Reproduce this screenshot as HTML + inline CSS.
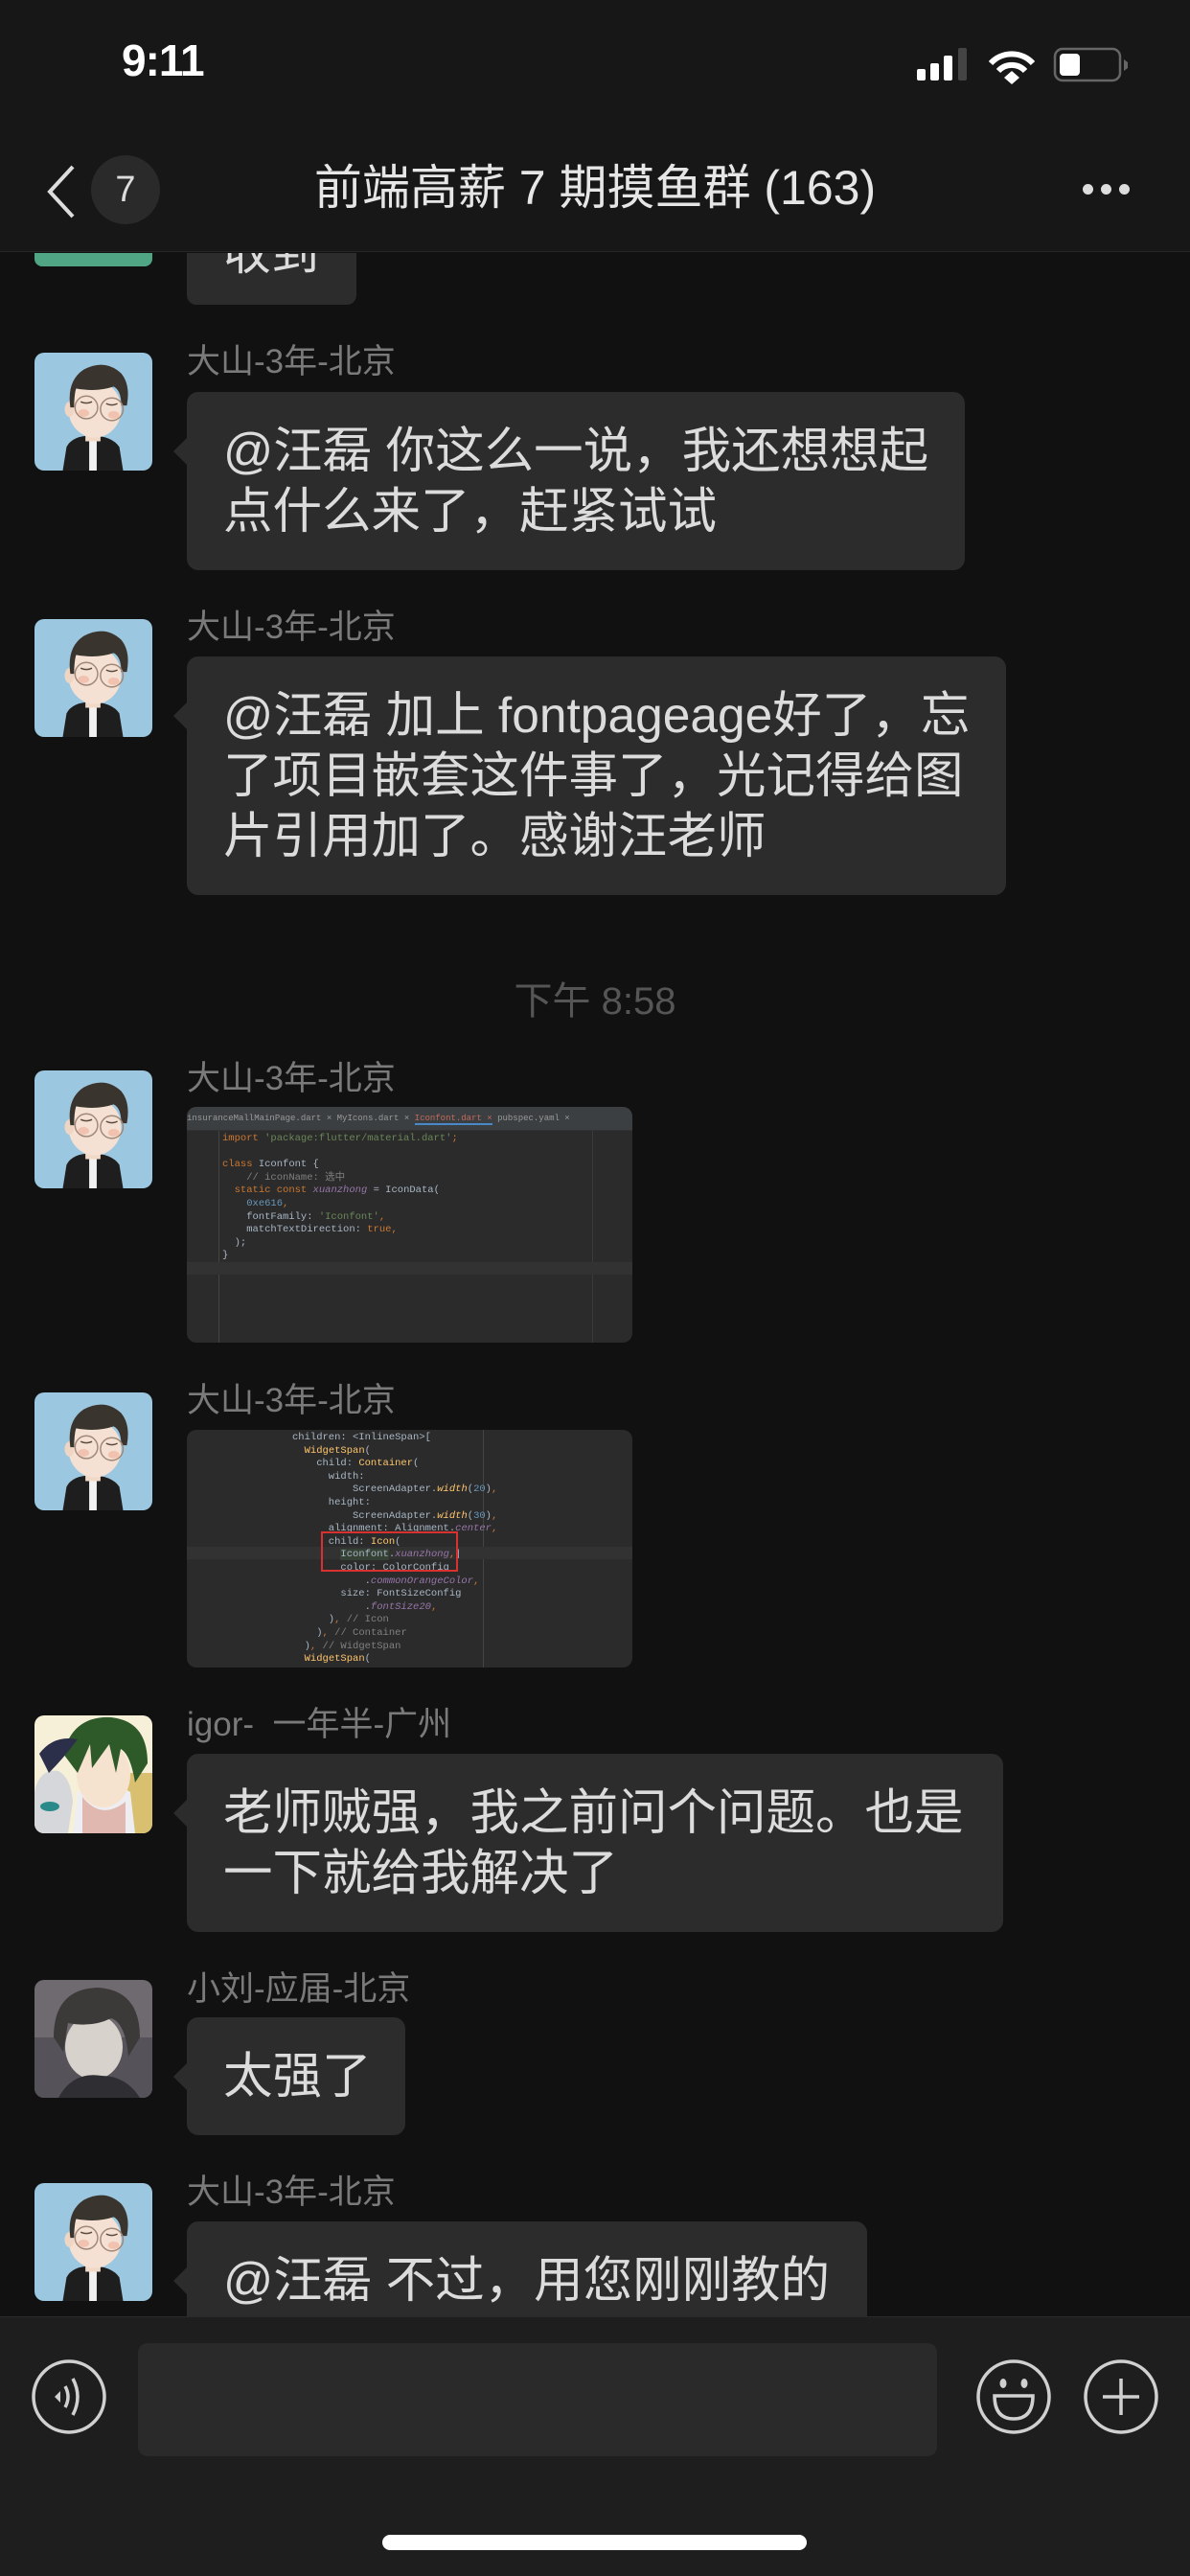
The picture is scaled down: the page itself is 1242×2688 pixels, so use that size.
<!DOCTYPE html>
<html><head><meta charset="utf-8">
<style>
*{margin:0;padding:0;box-sizing:border-box}
body{width:1242px;height:2688px;background:#111111;position:relative;overflow:hidden;font-family:"Liberation Sans","Noto Sans CJK SC",sans-serif;color:#d6d6d6}
.abs{position:absolute}
.name{position:absolute;left:195px;font-size:35px;color:#7a7a7a;line-height:40px;white-space:nowrap}
.bub{position:absolute;left:195px;background:#2c2c2c;border-radius:12px;padding:30px 38px;font-size:51.5px;line-height:63px;color:#dcdcdc;white-space:nowrap}
.bub:before{content:"";position:absolute;left:-14px;top:48px;border:14px solid transparent;border-left:0;border-right-color:#2c2c2c}
.av{position:absolute;left:36px;width:123px;height:123px;border-radius:10px;overflow:hidden}
.code{position:absolute;left:195px;width:465px;background:#2b2b2b;border-radius:10px;overflow:hidden;font-family:"Liberation Mono","Noto Sans CJK SC",monospace;font-size:10.5px;color:#a9b7c6;line-height:13.6px}
.code .l{white-space:pre;height:13.6px}
.k{color:#cc7832}.s{color:#6a8759}.c{color:#808080}.f{color:#ffc66d}.p{color:#9876aa;font-style:italic}
</style></head><body>
<svg width="0" height="0" style="position:absolute">
<defs>
<symbol id="man" viewBox="0 0 125 125">
<rect width="125" height="125" fill="#9cc7e0"/>
<path d="M30 125 L34 100 Q40 88 60 88 Q82 88 90 100 L94 125Z" fill="#1e1e1e"/>
<rect x="58" y="92" width="8" height="33" fill="#f2f2f2"/>
<rect x="54" y="80" width="16" height="14" fill="#f1d9c8"/>
<ellipse cx="64" cy="60" rx="28" ry="30" fill="#f5e1d3"/>
<ellipse cx="37" cy="60" rx="5" ry="8" fill="#efd5c3"/>
<path d="M38 58 Q34 30 52 18 Q75 6 92 22 Q102 34 98 56 L92 56 Q92 40 84 36 Q66 42 44 38 Q42 46 42 58Z" fill="#3a342e"/>
<circle cx="55" cy="58" r="12" fill="none" stroke="#a08878" stroke-width="1.5"/>
<circle cx="82" cy="60" r="12" fill="none" stroke="#a08878" stroke-width="1.5"/>
<ellipse cx="52" cy="64" rx="6" ry="4" fill="#f2c2b0"/>
<ellipse cx="84" cy="66" rx="6" ry="4" fill="#f2c2b0"/>
<path d="M49 52 Q55 55 61 52 M76 54 Q82 57 88 54" stroke="#5a4a40" stroke-width="1.5" fill="none"/>
</symbol>
</defs>
</svg>

<!-- header -->
<div class="abs" style="left:0;top:0;width:1242px;height:263px;background:#171717;border-bottom:1px solid #262626"></div>
<div class="abs" style="left:127px;top:36px;font-size:46px;color:#fff;font-weight:bold;letter-spacing:-1px">9:11</div>
<svg class="abs" style="left:950px;top:40px" width="240" height="50" viewBox="950 40 240 50">
<rect x="957" y="72" width="9" height="12" rx="2" fill="#fff"/>
<rect x="971" y="66" width="9" height="18" rx="2" fill="#fff"/>
<rect x="985" y="58" width="9" height="26" rx="2" fill="#fff"/>
<rect x="1000" y="50" width="9" height="34" rx="2" fill="#444"/>
<path d="M1034 66 A30 30 0 0 1 1078 66" stroke="#fff" stroke-width="6" fill="none"/>
<path d="M1042 74 A19 19 0 0 1 1070 74" stroke="#fff" stroke-width="6" fill="none"/>
<path d="M1048 81 L1056 74 L1064 81 L1056 88Z" fill="#fff"/>
<rect x="1101" y="51" width="68" height="33" rx="8" fill="none" stroke="#666" stroke-width="2.5"/>
<rect x="1106" y="56" width="21" height="23" rx="4" fill="#fff"/>
<path d="M1173 62 L1177 65 L1177 71 L1173 74Z" fill="#666"/>
</svg>
<svg class="abs" style="left:40px;top:170px" width="50" height="60"><path d="M36 4 L12 30 L36 56" stroke="#ddd" stroke-width="4" fill="none"/></svg>
<div class="abs" style="left:95px;top:162px;width:72px;height:72px;border-radius:36px;background:#2a2a2a;color:#ddd;font-size:38px;text-align:center;line-height:72px">7</div>
<div class="abs" style="left:0;width:1242px;top:163px;text-align:center;font-size:50px;color:#e6e6e6;line-height:66px">前端高薪 7 期摸鱼群 (163)</div>
<div class="abs" style="left:1130px;top:190px"><span style="display:inline-block;width:11px;height:11px;border-radius:6px;background:#ddd;margin-right:8px"></span><span style="display:inline-block;width:11px;height:11px;border-radius:6px;background:#ddd;margin-right:8px"></span><span style="display:inline-block;width:11px;height:11px;border-radius:6px;background:#ddd"></span></div>

<!-- partial top -->
<div class="abs" style="left:36px;top:264px;width:123px;height:14px;background:#4fa584;border-radius:0 0 8px 8px"></div>
<div class="abs" style="left:195px;top:264px;width:177px;height:54px;background:#2c2c2c;border-radius:0 0 10px 10px;overflow:hidden"><div style="font-size:50px;color:#dcdcdc;position:absolute;left:38px;top:-40px">收到</div></div>

<!-- msg1 -->
<svg class="av" style="top:368px"><use href="#man"/></svg>
<div class="name" style="top:358px">大山-3年-北京</div>
<div class="bub" style="top:409px;width:812px">@汪磊 你这么一说，我还想想起<br>点什么来了，赶紧试试</div>

<!-- msg2 -->
<svg class="av" style="top:646px"><use href="#man"/></svg>
<div class="name" style="top:635px">大山-3年-北京</div>
<div class="bub" style="top:685px;width:855px;height:249px">@汪磊 加上 fontpageage好了，忘<br>了项目嵌套这件事了，光记得给图<br>片引用加了。感谢汪老师</div>

<div class="abs" style="left:0;width:1242px;top:1012px;text-align:center;font-size:40px;color:#555">下午 8:58</div>

<!-- msg3 image -->
<svg class="av" style="top:1117px"><use href="#man"/></svg>
<div class="name" style="top:1106px">大山-3年-北京</div>
<div class="code" style="top:1155px;height:246px">
<div style="height:25px;background:#3c3f41;color:#999;font-size:9px;line-height:25px;white-space:nowrap;border-bottom:1px solid #323232">insuranceMallMainPage.dart ×  <span>MyIcons.dart ×</span>  <span style="color:#c06a5a;border-bottom:2px solid #4a88c7">Iconfont.dart ×</span>  pubspec.yaml ×</div>
<div class="abs" style="left:33px;top:25px;width:1px;height:221px;background:#444"></div>
<div class="abs" style="left:423px;top:25px;width:1px;height:221px;background:#3a3a3a"></div>
<div class="abs" style="left:0;top:162px;width:465px;height:13px;background:#323232"></div>
<div style="position:absolute;left:37px;top:27px"><div class="l"><span class="k">import</span> <span class="s">'package:flutter/material.dart'</span><span class="k">;</span></div><div class="l"> </div><div class="l"><span class="k">class</span> Iconfont {</div><div class="l">    <span class="c">// iconName: 选中</span></div><div class="l">  <span class="k">static const</span> <span class="p">xuanzhong</span> = IconData(</div><div class="l">    <span style="color:#6897bb">0xe616</span><span class="k">,</span></div><div class="l">    fontFamily: <span class="s">'Iconfont'</span><span class="k">,</span></div><div class="l">    matchTextDirection: <span class="k">true,</span></div><div class="l">  );</div><div class="l">}</div></div>
</div>

<!-- msg4 image -->
<svg class="av" style="top:1453px"><use href="#man"/></svg>
<div class="name" style="top:1442px">大山-3年-北京</div>
<div class="code" style="top:1492px;height:248px">
<div class="abs" style="left:309px;top:0;width:1px;height:248px;background:#444"></div>
<div class="abs" style="left:0;top:122px;width:465px;height:13px;background:#323232"></div>
<div style="position:absolute;left:110px;top:2px"><div class="l">children: &lt;InlineSpan&gt;[</div><div class="l">  <span class="f">WidgetSpan</span>(</div><div class="l">    child: <span class="f">Container</span>(</div><div class="l">      width:</div><div class="l">          ScreenAdapter.<span class="f" style="font-style:italic">width</span>(<span style="color:#6897bb">20</span>)<span class="k">,</span></div><div class="l">      height:</div><div class="l">          ScreenAdapter.<span class="f" style="font-style:italic">width</span>(<span style="color:#6897bb">30</span>)<span class="k">,</span></div><div class="l">      alignment: Alignment.<span class="p">center</span><span class="k">,</span></div><div class="l">      child: <span class="f">Icon</span>(</div><div class="l">        <span style="background:#344134">Iconfont</span>.<span class="p">xuanzhong</span><span class="k">,</span>|</div><div class="l">        color: ColorConfig</div><div class="l">            .<span class="p">commonOrangeColor</span><span class="k">,</span></div><div class="l">        size: FontSizeConfig</div><div class="l">            .<span class="p">fontSize20</span><span class="k">,</span></div><div class="l">      )<span class="k">,</span> <span class="c">// Icon</span></div><div class="l">    )<span class="k">,</span> <span class="c">// Container</span></div><div class="l">  )<span class="k">,</span> <span class="c">// WidgetSpan</span></div><div class="l">  <span class="f">WidgetSpan</span>(</div></div>
<div class="abs" style="left:140px;top:106px;width:143px;height:42px;border:2px solid #d93030"></div>
</div>

<!-- igor -->
<svg class="av" style="top:1790px" viewBox="0 0 123 123">
<rect width="123" height="123" fill="#f7f0d8"/>
<rect x="95" y="60" width="28" height="63" fill="#d8c070"/>
<path d="M40 123 L45 80 Q70 60 100 80 L105 123Z" fill="#eeeef2"/>
<path d="M50 85 Q70 110 95 90 L95 123 L50 123Z" fill="#e0b8b0"/>
<ellipse cx="72" cy="62" rx="28" ry="34" fill="#f6e3cf"/>
<path d="M30 40 Q40 0 80 2 Q118 6 118 50 L105 70 Q100 40 90 35 L85 60 L78 30 L60 55 L58 30 L45 60Z" fill="#2e5a2a"/>
<path d="M0 80 Q5 55 25 58 Q38 65 40 90 L35 123 L0 123Z" fill="#d5d7db"/>
<ellipse cx="16" cy="95" rx="10" ry="5" fill="#2a8a8a"/>
<path d="M5 40 Q20 20 45 25 Q30 45 15 60Z" fill="#2b2f4a"/>
</svg>
<div class="name" style="top:1780px">igor-&nbsp;&nbsp;一年半-广州</div>
<div class="bub" style="top:1830px;width:852px">老师贼强，我之前问个问题。也是<br>一下就给我解决了</div>

<!-- 小刘 -->
<svg class="av" style="top:2066px" viewBox="0 0 123 123">
<rect width="123" height="123" fill="#6e6a70"/>
<rect x="0" y="60" width="123" height="63" fill="#55525a"/>
<ellipse cx="62" cy="70" rx="30" ry="34" fill="#d8d2cc"/>
<path d="M20 60 Q20 10 65 8 Q110 10 110 60 L98 80 Q95 45 80 40 Q60 50 35 45 L30 75Z" fill="#3c3a38"/>
<path d="M25 123 Q40 95 70 100 Q95 100 110 123Z" fill="#2f2e32"/>
</svg>
<div class="name" style="top:2056px">小刘-应届-北京</div>
<div class="bub" style="top:2105px;width:228px">太强了</div>

<!-- last -->
<svg class="av" style="top:2278px"><use href="#man"/></svg>
<div class="name" style="top:2268px">大山-3年-北京</div>
<div class="bub" style="top:2318px;width:710px;height:140px">@汪磊 不过，用您刚刚教的</div>

<!-- bottom bar -->
<div class="abs" style="left:0;top:2417px;width:1242px;height:271px;background:#1e1e1e;border-top:1px solid #2a2a2a"></div>
<div class="abs" style="left:144px;top:2445px;width:834px;height:118px;background:#2a2a2a;border-radius:10px"></div>
<svg class="abs" style="left:0;top:2440px" width="1242" height="130" viewBox="0 2440 1242 130">
<circle cx="72" cy="2501" r="37" fill="none" stroke="#d0d0d0" stroke-width="3.5"/>
<path d="M57 2501 L63 2495 L63 2507Z" fill="#d0d0d0"/>
<path d="M68 2490 Q74 2501 68 2512" stroke="#d0d0d0" stroke-width="3.5" fill="none"/>
<path d="M76 2482 Q86 2501 76 2520" stroke="#d0d0d0" stroke-width="3.5" fill="none"/>
<circle cx="1058" cy="2501" r="37" fill="none" stroke="#d0d0d0" stroke-width="3.5"/>
<ellipse cx="1047" cy="2487" rx="3.5" ry="5" fill="#d0d0d0"/>
<ellipse cx="1069" cy="2487" rx="3.5" ry="5" fill="#d0d0d0"/>
<path d="M1038 2500 L1078 2500 Q1078 2524 1058 2524 Q1038 2524 1038 2500Z" fill="none" stroke="#d0d0d0" stroke-width="3.5"/>
<circle cx="1170" cy="2501" r="37" fill="none" stroke="#d0d0d0" stroke-width="3.5"/>
<path d="M1170 2482 L1170 2520 M1151 2501 L1189 2501" stroke="#d0d0d0" stroke-width="3.5"/>
</svg>
<div class="abs" style="left:399px;top:2645px;width:443px;height:16px;border-radius:8px;background:#fff"></div>
</body></html>
